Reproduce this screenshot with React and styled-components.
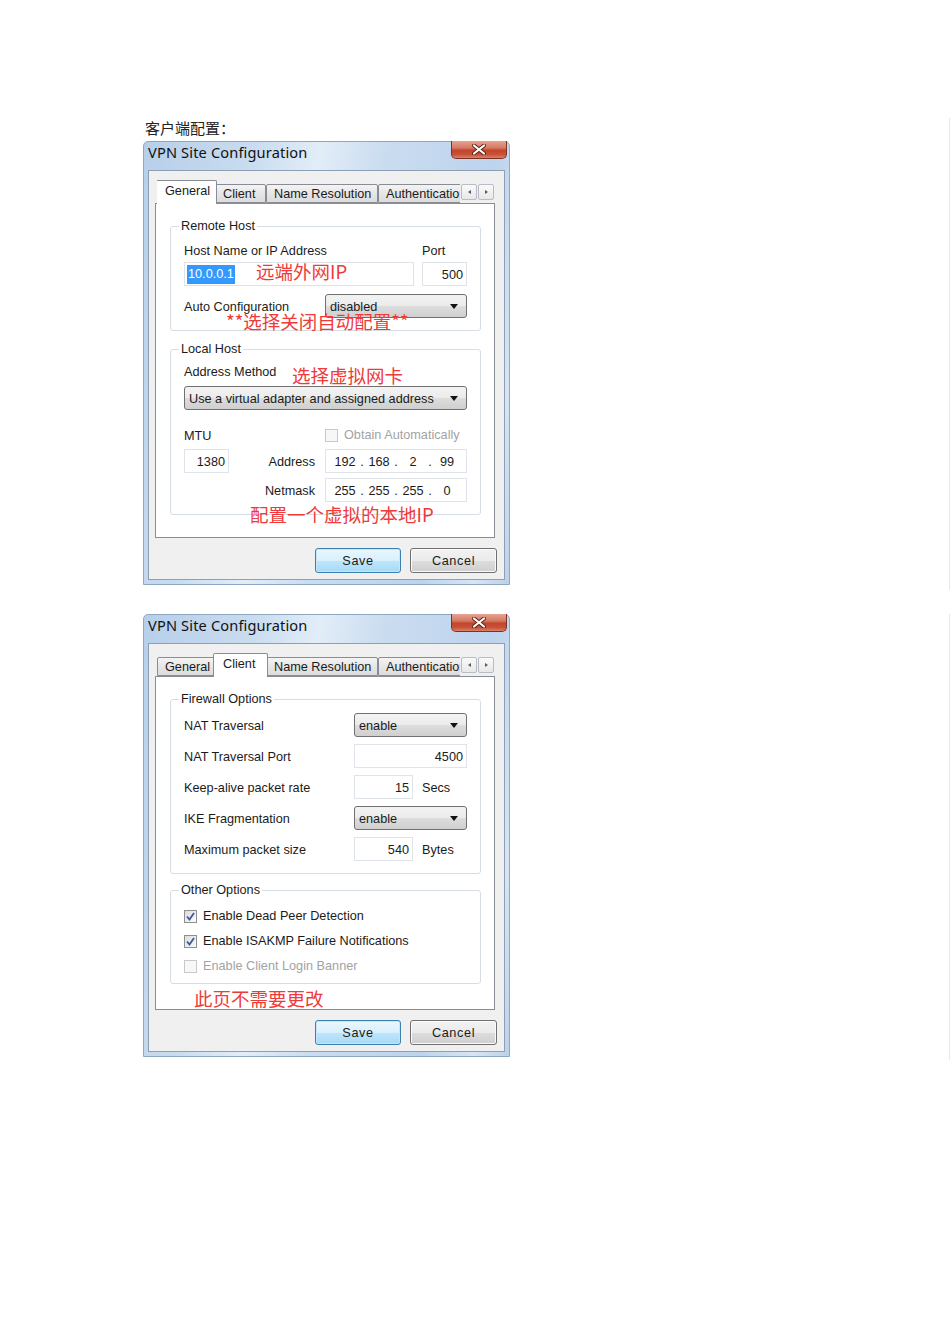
import React from 'react'
import styled, { createGlobalStyle } from 'styled-components'

const GlobalStyle = createGlobalStyle`
  body {
    margin: 0;
    background: #ffffff;
    font-family: "Liberation Sans", Arial, sans-serif;
  }
`

const App = () => {
  return (
    <PAGE>
      <GlobalStyle />
      <SECTION $pb={5}>
        <CAPTION>客户端配置：</CAPTION>
        <Dialog active='General' panelHeight={335}>
          <GeneralPage />
        </Dialog>
      </SECTION>
      <SECTION $mt={24} $pb={3}>
        <Dialog active='Client' panelHeight={334}>
          <ClientPage />
        </Dialog>
      </SECTION>
    </PAGE>
  )
}

export default App

const TABS = [
  { name: 'General', w: 58 },
  { name: 'Client', w: 51 },
  { name: 'Name Resolution', w: 112 },
  { name: 'Authentication', w: 110 },
]

const Dialog = ({ active, panelHeight, children }) => (
  <WINDOW>
    <TITLEBAR>
      <TITLE>VPN Site Configuration</TITLE>
      <CLOSEBTN>
        <svg width='16' height='11' viewBox='0 0 16 11'>
          <path d='M3 1.5 L13 9.5 M13 1.5 L3 9.5' stroke='#5a2318' strokeWidth='4' strokeLinecap='round' />
          <path d='M3 1.5 L13 9.5 M13 1.5 L3 9.5' stroke='#ffffff' strokeWidth='2.2' strokeLinecap='round' />
        </svg>
      </CLOSEBTN>
    </TITLEBAR>
    <CLIENT>
      <TABROW>
        <TABSTRIP>
          {TABS.map((t) => (
            <TAB key={t.name} $w={t.w} $active={t.name === active}>
              {t.name}
            </TAB>
          ))}
        </TABSTRIP>
        <SCROLLBTN>
          <ARROW $dir='left' />
        </SCROLLBTN>
        <SCROLLBTN>
          <ARROW $dir='right' />
        </SCROLLBTN>
      </TABROW>
      <PANEL $h={panelHeight}>{children}</PANEL>
      <BUTTONROW>
        <BUTTON $primary>Save</BUTTON>
        <BUTTON>Cancel</BUTTON>
      </BUTTONROW>
    </CLIENT>
  </WINDOW>
)

const Select = ({ value, width }) => (
  <SELECT $w={width}>
    <span>{value}</span>
    <CARET />
  </SELECT>
)

const IpField = ({ parts }) => (
  <IPBOX>
    {parts.map((p, i) => (
      <React.Fragment key={i}>
        <IPPART>{p}</IPPART>
        {i < 3 && <IPDOT>.</IPDOT>}
      </React.Fragment>
    ))}
  </IPBOX>
)

const Check = ({ checked, disabled, children }) => (
  <CHECKROW $disabled={disabled}>
    <CHECKBOX $disabled={disabled}>
      {checked && (
        <svg width='11' height='11' viewBox='0 0 11 11'>
          <path d='M2 5.5 L4.5 8.5 L9 2' fill='none' stroke='#3b5a98' strokeWidth='1.8' />
        </svg>
      )}
    </CHECKBOX>
    {children}
  </CHECKROW>
)

const GeneralPage = () => (
  <>
    <GROUP>
      <LEGEND>Remote Host</LEGEND>
      <HOSTGRID $mt={8}>
        <LABEL>Host Name or IP Address</LABEL>
        <LABEL>Port</LABEL>
      </HOSTGRID>
      <NOTEWRAP>
        <HOSTGRID $mt={4}>
          <INPUT>
            <SELECTED>10.0.0.1</SELECTED>
          </INPUT>
          <INPUT $right>500</INPUT>
        </HOSTGRID>
        <NOTE style={{ left: 72, top: -1 }}>远端外网IP</NOTE>
      </NOTEWRAP>
      <NOTEWRAP>
        <FIELDROW $mt={8}>
          <LABEL>Auto Configuration</LABEL>
          <Select value='disabled' width={142} />
        </FIELDROW>
        <NOTE style={{ left: 42, top: 17 }}>**选择关闭自动配置**</NOTE>
      </NOTEWRAP>
    </GROUP>

    <GROUP $mt={10}>
      <LEGEND>Local Host</LEGEND>
      <NOTEWRAP>
        <TEXTLINE $mt={7}>Address Method</TEXTLINE>
        <NOTE style={{ left: 108, top: 1 }}>选择虚拟网卡</NOTE>
      </NOTEWRAP>
      <SELECTWRAP $mt={6}>
        <Select value='Use a virtual adapter and assigned address' />
      </SELECTWRAP>
      <ADDRGRID $mt={16} $h={16}>
        <LABEL>MTU</LABEL>
        <span />
        <Check disabled>Obtain Automatically</Check>
      </ADDRGRID>
      <ADDRGRID $mt={7} $h={24}>
        <INPUT $right>1380</INPUT>
        <LABEL $right>Address</LABEL>
        <IpField parts={['192', '168', '2', '99']} />
      </ADDRGRID>
      <NOTEWRAP>
        <ADDRGRID $mt={5} $h={24}>
          <span />
          <LABEL $right>Netmask</LABEL>
          <IpField parts={['255', '255', '255', '0']} />
        </ADDRGRID>
        <NOTE style={{ left: 66, top: 26 }}>配置一个虚拟的本地IP</NOTE>
      </NOTEWRAP>
    </GROUP>
  </>
)

const ClientPage = () => (
  <>
    <GROUP>
      <LEGEND>Firewall Options</LEGEND>
      <FIREWALLGRID>
        <LABEL>NAT Traversal</LABEL>
        <WIDECELL>
          <Select value='enable' />
        </WIDECELL>
        <LABEL>NAT Traversal Port</LABEL>
        <WIDECELL>
          <INPUT $right>4500</INPUT>
        </WIDECELL>
        <LABEL>Keep-alive packet rate</LABEL>
        <INPUT $right>15</INPUT>
        <UNIT>Secs</UNIT>
        <LABEL>IKE Fragmentation</LABEL>
        <WIDECELL>
          <Select value='enable' />
        </WIDECELL>
        <LABEL>Maximum packet size</LABEL>
        <INPUT $right>540</INPUT>
        <UNIT>Bytes</UNIT>
      </FIREWALLGRID>
    </GROUP>

    <GROUP $mt={8} $pb={8}>
      <LEGEND>Other Options</LEGEND>
      <CHECKLIST>
        <Check checked>Enable Dead Peer Detection</Check>
        <Check checked>Enable ISAKMP Failure Notifications</Check>
        <Check disabled>Enable Client Login Banner</Check>
      </CHECKLIST>
    </GROUP>
    <NOTE style={{ left: 38, top: 311 }}>此页不需要更改</NOTE>
  </>
)

const PAGE = styled.div`
  padding-top: 118px;
  padding-bottom: 40px;
`
const SECTION = styled.section`
  box-sizing: border-box;
  width: 807px;
  margin-left: 143px;
  margin-top: ${(p) => p.$mt || 0}px;
  padding-bottom: ${(p) => p.$pb || 0}px;
  border-right: 1px solid #e8e8e8;
`
const CAPTION = styled.div`
  font-family: "Noto Sans CJK SC", sans-serif;
  font-size: 15px;
  line-height: 20px;
  color: #222;
  margin-left: 2px;
  margin-bottom: 3px;
`
const WINDOW = styled.div`
  box-sizing: border-box;
  width: 367px;
  border: 1px solid #8ea7c3;
  border-radius: 5px 5px 0 0;
  padding: 0 4px 4px 4px;
  display: flex;
  flex-direction: column;
  background: linear-gradient(
    100deg,
    #b7cfe9 0%,
    #c9dcf0 25%,
    #e2edf8 40%,
    #cadcf0 55%,
    #bdd3ec 80%,
    #d7e5f3 92%,
    #bcd2ea 100%
  );
`
const TITLEBAR = styled.div`
  height: 28px;
  display: flex;
  justify-content: space-between;
  align-items: flex-start;
`
const TITLE = styled.div`
  font-family: "Noto Sans", "Open Sans", sans-serif;
  font-size: 14.6px;
  line-height: 21px;
  color: #111;
  letter-spacing: 0.15px;
`
const CLOSEBTN = styled.div`
  width: 56px;
  height: 18px;
  margin-top: -1px;
  margin-right: -2px;
  box-sizing: border-box;
  border: 1px solid #7a3427;
  border-top: none;
  border-radius: 0 0 5px 5px;
  background: linear-gradient(#e6a392 0%, #d67a62 40%, #c2442b 55%, #c9533a 80%, #d9826a 100%);
  display: flex;
  align-items: center;
  justify-content: center;
`
const CLIENT = styled.div`
  background: #f0f0f0;
  border: 1px solid #8d9fb3;
  padding: 9px 9px 6px 6px;
  display: flex;
  flex-direction: column;
`
const TABROW = styled.div`
  height: 24px;
  margin-bottom: -1px;
  display: flex;
  align-items: flex-start;
  padding-left: 2px;
  position: relative;
  z-index: 1;
`
const TABSTRIP = styled.div`
  width: 303px;
  height: 24px;
  display: flex;
  align-items: flex-end;
  overflow: hidden;
`
const TAB = styled.div`
  flex: none;
  box-sizing: border-box;
  width: ${(p) => (p.$active ? p.$w + 4 : p.$w)}px;
  height: ${(p) => (p.$active ? 24 : 19)}px;
  margin: ${(p) => (p.$active ? '0 -2px 0 -2px' : '0 0 1px 0')};
  position: relative;
  z-index: ${(p) => (p.$active ? 2 : 1)};
  border: 1px solid #898c95;
  border-bottom: ${(p) => (p.$active ? 'none' : '1px solid #898c95')};
  border-radius: 2px 2px 0 0;
  background: ${(p) =>
    p.$active ? '#ffffff' : 'linear-gradient(#f4f4f4, #e6e6e6 50%, #dcdcdc)'};
  font-size: 12.7px;
  line-height: ${(p) => (p.$active ? 21 : 19)}px;
  padding-left: ${(p) => (p.$active ? 9 : 7)}px;
  white-space: nowrap;
  color: #1b1b1b;
`
const SCROLLBTN = styled.div`
  flex: none;
  box-sizing: border-box;
  width: 16px;
  height: 16px;
  margin-top: 4px;
  margin-left: 1px;
  border: 1px solid #b8bcc4;
  border-radius: 2px;
  background: linear-gradient(#fafafa, #e8e8e8);
  display: flex;
  align-items: center;
  justify-content: center;
`
const ARROW = styled.div`
  width: 0;
  height: 0;
  border-top: 2.5px solid transparent;
  border-bottom: 2.5px solid transparent;
  ${(p) =>
    p.$dir === 'left'
      ? 'border-right: 3px solid #5a5a5a;'
      : 'border-left: 3px solid #5a5a5a;'}
`
const PANEL = styled.div`
  box-sizing: border-box;
  height: ${(p) => p.$h}px;
  background: #ffffff;
  border: 1px solid #898c95;
  padding: 14px 13px 0 14px;
  position: relative;
`
const GROUP = styled.fieldset`
  margin: ${(p) => p.$mt || 0}px 0 0 0;
  border: 1px solid #d6dde3;
  border-radius: 3px;
  padding: 0 13px ${(p) => (p.$pb === undefined ? 12 : p.$pb)}px 13px;
  min-width: 0;
`
const LEGEND = styled.legend`
  font-size: 12.7px;
  line-height: 16px;
  padding: 0 2px;
  margin-left: -5px;
  color: #1b1b1b;
`
const LABEL = styled.div`
  box-sizing: border-box;
  font-size: 12.7px;
  color: #1b1b1b;
  white-space: nowrap;
  display: flex;
  align-items: center;
  padding-top: 2px;
  justify-content: ${(p) => (p.$right ? 'flex-end' : 'flex-start')};
`
const TEXTLINE = styled.div`
  margin-top: ${(p) => p.$mt || 0}px;
  height: 16px;
  line-height: 16px;
  font-size: 12.7px;
  color: #1b1b1b;
`
const HOSTGRID = styled.div`
  margin-top: ${(p) => p.$mt || 0}px;
  display: grid;
  grid-template-columns: 230px 45px;
  column-gap: 8px;
`
const FIELDROW = styled.div`
  margin-top: ${(p) => p.$mt || 0}px;
  height: 24px;
  display: flex;
  justify-content: space-between;
  align-items: stretch;
`
const ADDRGRID = styled.div`
  margin-top: ${(p) => p.$mt || 0}px;
  height: ${(p) => p.$h}px;
  display: grid;
  grid-template-columns: 45px 1fr 142px;
  column-gap: 10px;
`
const SELECTWRAP = styled.div`
  margin-top: ${(p) => p.$mt || 0}px;
  height: 24px;
  display: flex;
`
const NOTEWRAP = styled.div`
  position: relative;
`
const NOTE = styled.div`
  position: absolute;
  font-family: "Noto Sans CJK SC", sans-serif;
  font-size: 18.5px;
  line-height: 20px;
  color: #ef3a3a;
  white-space: nowrap;
  pointer-events: none;
  z-index: 3;
`
const INPUT = styled.div`
  box-sizing: border-box;
  height: 24px;
  border: 1px solid #dfe4ea;
  background: #ffffff;
  font-size: 12.7px;
  color: #1b1b1b;
  display: flex;
  align-items: center;
  justify-content: ${(p) => (p.$right ? 'flex-end' : 'flex-start')};
  padding: 1px 3px 0 2px;
`
const SELECTED = styled.span`
  background: #3399ff;
  color: #ffffff;
  line-height: 19px;
  padding: 0 1px;
`
const SELECT = styled.div`
  box-sizing: border-box;
  width: ${(p) => (p.$w ? `${p.$w}px` : '100%')};
  height: 24px;
  border: 1px solid #707070;
  border-radius: 3px;
  background: linear-gradient(#f3f3f3 0%, #ebebeb 50%, #dddddd 51%, #cfcfcf 100%);
  display: flex;
  align-items: center;
  justify-content: space-between;
  padding: 1px 8px 0 4px;
  font-size: 12.7px;
  color: #1b1b1b;
  white-space: nowrap;
`
const CARET = styled.div`
  width: 0;
  height: 0;
  border-left: 4px solid transparent;
  border-right: 4px solid transparent;
  border-top: 5px solid #111;
`
const IPBOX = styled.div`
  box-sizing: border-box;
  height: 24px;
  border: 1px solid #dfe4ea;
  background: #ffffff;
  display: flex;
  align-items: center;
  padding: 1px 0 0 4px;
  font-size: 12.7px;
  color: #1b1b1b;
`
const IPPART = styled.span`
  width: 30px;
  text-align: center;
`
const IPDOT = styled.span`
  width: 4px;
  text-align: center;
`
const CHECKROW = styled.div`
  display: flex;
  align-items: center;
  gap: 6px;
  height: 18px;
  font-size: 12.7px;
  white-space: nowrap;
  color: ${(p) => (p.$disabled ? '#a3a3a3' : '#1b1b1b')};
`
const CHECKBOX = styled.div`
  box-sizing: border-box;
  width: 13px;
  height: 13px;
  flex: none;
  border: 1px solid ${(p) => (p.$disabled ? '#c9c9c9' : '#8f8f8f')};
  background: ${(p) =>
    p.$disabled ? '#f7f7f7' : 'linear-gradient(135deg, #dcdcdc, #fbfbfb)'};
  display: flex;
  align-items: center;
  justify-content: center;
`
const FIREWALLGRID = styled.div`
  margin-top: 6px;
  display: grid;
  grid-template-columns: 170px 59px 54px;
  grid-auto-rows: 24px;
  row-gap: 7px;
`
const WIDECELL = styled.div`
  grid-column: 2 / span 2;
  display: flex;
  flex-direction: column;
`
const UNIT = styled.div`
  font-size: 12.7px;
  color: #1b1b1b;
  padding: 1px 0 0 9px;
  display: flex;
  align-items: center;
`
const CHECKLIST = styled.div`
  margin-top: 9px;
  display: flex;
  flex-direction: column;
  gap: 7px;
`
const BUTTONROW = styled.div`
  margin-top: 10px;
  margin-right: -2px;
  display: flex;
  justify-content: flex-end;
  gap: 9px;
`
const BUTTON = styled.div`
  box-sizing: border-box;
  width: ${(p) => (p.$primary ? 86 : 87)}px;
  height: 25px;
  border-radius: 3px;
  border: 1px solid ${(p) => (p.$primary ? '#3c7fb1' : '#707070')};
  background: ${(p) =>
    p.$primary
      ? 'linear-gradient(#eaf6fd 0%, #d9f0fc 50%, #bee6fd 51%, #a7d9f5 100%)'
      : 'linear-gradient(#f2f2f2 0%, #ebebeb 50%, #dddddd 51%, #cfcfcf 100%)'};
  box-shadow: ${(p) => (p.$primary ? 'inset 0 0 0 1px #c6e6fb' : 'inset 0 0 0 1px #fbfbfb')};
  display: flex;
  align-items: center;
  justify-content: center;
  padding-top: 1px;
  font-size: 12.7px;
  letter-spacing: 0.6px;
  color: #1b1b1b;
`
